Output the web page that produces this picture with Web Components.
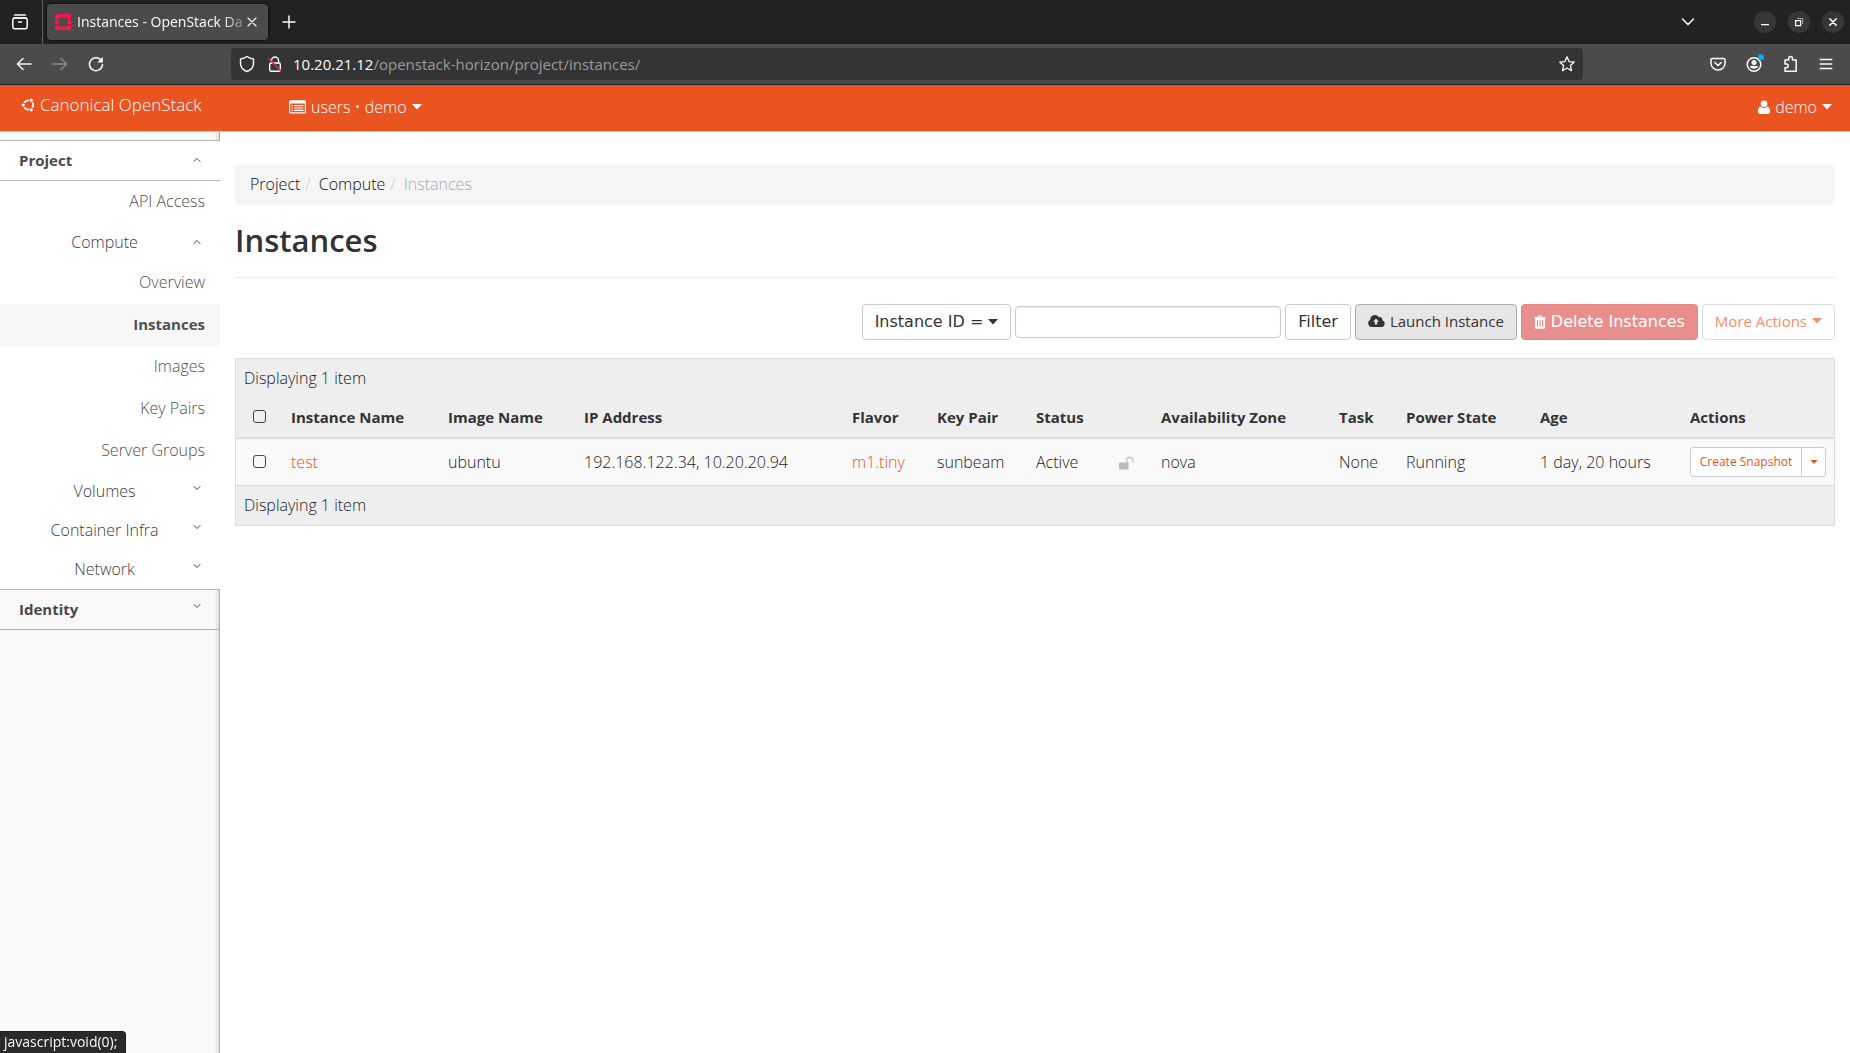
<!DOCTYPE html>
<html lang="en">
<head>
<meta charset="utf-8">
<title>Instances - OpenStack Dashboard</title>
<style>
  body { margin: 0; min-height: 100vh; display: flex; flex-direction: column; background: #fff; color: #222;
    font: 300 16px/24px "Open Sans", "Noto Sans", sans-serif; }
  app-body { flex: 1; }
</style>
</head>
<body>
<browser-window></browser-window>
<app-header></app-header>
<app-body>
  <side-nav slot="nav">
    <nav-group label="Project" open>
      <nav-link>API Access</nav-link>
      <nav-panel label="Compute" open></nav-panel>
      <nav-link>Overview</nav-link>
      <nav-link active>Instances</nav-link>
      <nav-link>Images</nav-link>
      <nav-link>Key Pairs</nav-link>
      <nav-link>Server Groups</nav-link>
      <nav-panel label="Volumes"></nav-panel>
      <nav-panel label="Container Infra"></nav-panel>
      <nav-panel label="Network"></nav-panel>
    </nav-group>
    <nav-group label="Identity"></nav-group>
  </side-nav>
  <page-heading>Instances</page-heading>
  <table-actions></table-actions>
  <instance-table></instance-table>
</app-body>
<status-hint>javascript:void(0);</status-hint>

<script>
const define = (name, html) => customElements.define(name, class extends HTMLElement {
  constructor() {
    super();
    this.attachShadow({ mode: 'open' }).innerHTML = '<style>*{box-sizing:border-box}button,input{font:inherit;color:inherit;margin:0}button{cursor:pointer}a{color:inherit;text-decoration:none}</style>' +
      (typeof html === 'function' ? html(this) : html);
  }
});

/* name: [width, height, viewBox, markup] */
const line = (d, w = 1.5) => `<path d="${d}" fill="none" stroke="currentColor" stroke-width="${w}" stroke-linecap="round" stroke-linejoin="round"/>`;
const friend = (x, y) => `<circle cx="${x}" cy="${y}" r="2.500" fill="#e95420"/><circle cx="${x}" cy="${y}" r="1.600" fill="currentColor"/>`;
const icons = {
  view: [18, 18, '0 0 18 18', line('M3.500 2h11M3 5h12', 1.4) + '<rect x="1.800" y="5" width="14.400" height="10.800" rx="2" fill="none" stroke="currentColor" stroke-width="1.500"/>' + line('M7.500 9h3')],
  favicon: [16, 16, '0 0 16 16', '<path d="M1 0h14L16 1V5h-3.500V3.500h-9V5H0V1zM0 6h3.500v4H0zM12.500 6H16v4h-3.500zM0 11h3.500v1.500h9V11H16v4L15 16H1L0 15z" fill="#f5174a"/><path d="M0 5h4v1H0zM12 5h4v1h-4zM0 10h4v1H0zM12 10h4v1h-4z" fill="#b01a3a"/>'],
  close: [10, 10, '0 0 10 10', line('M1 1l8 8M9 1L1 9', 1.2)],
  plus: [14, 14, '0 0 14 14', line('M7 1v12M1 7h12')],
  down: [14, 8, '0 0 14 8', line('M1.500 1l5.500 5.500L12.500 1')],
  min: [10, 10, '0 0 10 10', '<path d="M1 7h8v1.300H1z" fill="currentColor"/>'],
  max: [10, 10, '0 0 10 10', '<path d="M1.600 3.600h5v5h-5z" fill="none" stroke="currentColor" stroke-width="1.300"/><path d="M3.500 1.500h5.200V7" fill="none" stroke="#aaa"/>'],
  cross: [10, 10, '0 0 10 10', line('M1.800 1.800l6.400 6.400M8.200 1.800L1.800 8.200', 1.6)],
  back: [16, 16, '0 0 16 16', line('M15 8H1.500M7 2.500L1.500 8 7 13.500')],
  forward: [16, 16, '0 0 16 16', line('M1 8h13.500M9 2.500L14.500 8 9 13.500')],
  reload: [16, 16, '0 0 16 16', line('M13.800 5.200A6.500 6.500 0 1 0 14.500 8.500') + '<path d="M14.800 1v5.500H9.300z" fill="currentColor"/>'],
  shield: [16, 18, '0 0 16 18', line('M8 1.500c2 1.500 4 2.200 6.500 2.500v4c0 4-2.500 7-6.500 8.500C4 15 1.500 12 1.500 8V4C4 3.700 6 3 8 1.500z', 1.4)],
  lock: [16, 18, '0 0 16 18', '<rect x="2.700" y="8" width="10.600" height="8.200" rx="1.500" fill="none" stroke="currentColor" stroke-width="1.400"/>' + line('M4.500 8V5.500a3.500 3.500 0 0 1 7 0V8', 1.4) + '<path d="M1 3l13.500 13.500" stroke="#e22850" stroke-width="1.700"/>'],
  star: [18, 18, '0 0 18 18', line('M9 1.800l2.100 4.800 5.200.5-3.900 3.500 1.100 5.100L9 13l-4.500 2.700 1.100-5.100L1.700 7.100l5.200-.5z', 1.3)],
  pocket: [16, 16, '0 0 16 16', line('M2.300 2.500h11.400q1.300 0 1.300 1.300v3.400a7 6.800 0 0 1-14 0V3.800q0-1.300 1.300-1.300zM4.800 6.500L8 9.500l3.200-3', 1.5)],
  account: [20, 20, '0 0 20 20', '<circle cx="10" cy="10.500" r="6.800" fill="none" stroke="currentColor" stroke-width="1.500"/><circle cx="10" cy="8.500" r="2.500" fill="currentColor"/><path d="M5.800 12h8.400a4.300 3.500 0 0 1-8.400 0z" fill="currentColor"/><circle cx="17" cy="3.200" r="3" fill="#00b3f4"/>'],
  puzzle: [16, 18, '0 0 16 18', line('M6.700 5V3.400a1.900 1.900 0 0 1 3.800 0V5h3.700v11.300H3v-3.600h1.300a1.900 1.900 0 0 0 0-3.800H3V5z', 1.5)],
  menu: [14, 14, '0 0 14 14', line('M1.200 2.500h11.600M1.200 7h11.600M1.200 11.500h11.600', 1.4)],
  circle: [14, 14, '0 0 14 14', '<circle cx="7.500" cy="7" r="4.600" fill="none" stroke="currentColor" stroke-width="1.900"/>' + friend(2.2, 7) + friend(10.2, 2.2) + friend(10.2, 11.8)],
  list: [17, 14, '0 0 17 14', '<rect x=".6" y=".9" width="15.800" height="12" rx="1" fill="none" stroke="currentColor" stroke-width="1.200"/><path d="M.5 1h16v2.500H.5zM2.500 5h1.300v1.200H2.500zM2.500 7.400h1.300v1.200H2.500zM2.500 9.800h1.300V11H2.500zM5 5h9.500v1.200H5zM5 7.400h9.500v1.200H5zM5 9.800h9.500V11H5z" fill="currentColor"/>'],
  user: [12, 14, '0 0 12 14', '<circle cx="6" cy="3.700" r="3.300" fill="currentColor"/><path d="M2.500 6.500Q6 9.500 9.500 6.500Q12 7.500 12 11.500Q12 14 9.800 14H2.200Q0 14 0 11.500Q0 7.500 2.500 6.500z" fill="currentColor"/>'],
  caret: [10, 6, '0 0 10 6', '<path d="M0 0h10L5 5.500z" fill="currentColor"/>'],
  caretSmall: [8, 4, '0 0 8 4', '<path d="M.5 0h7L4 4z" fill="currentColor"/>'],
  up: [8, 6, '0 0 8 6', line('M1 4.500L4 1.500l3 3', 1)],
  dn: [8, 6, '0 0 8 6', line('M1 1.500l3 3 3-3', 1)],
  cloud: [17, 14, '0 0 17 14', '<path d="M3.800 13A3.800 3.800 0 0 1 2.300 5.800A4.600 4.600 0 0 1 10.800 3.300A2.600 2.600 0 0 1 14.300 6.200A3.500 3.500 0 0 1 13.500 13z" fill="currentColor"/><path d="M8 4.500l3 3.200H9.200V10.500H6.800V7.700H5z" fill="#e6e6e6"/>'],
  trash: [12, 14, '0 0 12 14', '<path d="M0 2.200h3.500L4.300.4h3.400l.8 1.800H12v1.300h-1V12.500q0 1.300-1.300 1.300H2.300Q1 13.800 1 12.500V3.500H0zM4.700 2.200h2.600l-.3-.8H5zM3 5v6.800h1.100V5zM5.500 5v6.800h1.100V5zM8 5v6.800h1.100V5z" fill="currentColor" fill-rule="evenodd"/>'],
  unlock: [16, 14, '0 0 16 14', '<rect x="0" y="6.500" width="9.600" height="7" rx=".8" fill="currentColor"/><path d="M7.800 7V4.200a3 3 0 0 1 6 0V6.500" fill="none" stroke="currentColor" stroke-width="1.500" opacity=".8"/>']
};
customElements.define('app-icon', class extends HTMLElement {
  constructor() { super(); this.attachShadow({ mode: 'open' }); }
  connectedCallback() {
    const [w, h, box, body] = icons[this.getAttribute('name')];
    this.shadowRoot.innerHTML = `<style>:host{display:inline-flex;flex:none}svg{display:block}</style><svg width="${w}" height="${h}" viewBox="${box}" aria-hidden="true">${body}</svg>`;
  }
});
const icon = name => `<app-icon name="${name}"></app-icon>`;

define('browser-window', `
<style>
  :host { display: block; color: #fbfbfe; font: 400 14px/20px "Open Sans", "Noto Sans", sans-serif; border-bottom: 1px solid #1c1b22; }
  button { border: 0; background: none; padding: 0; display: flex; align-items: center; justify-content: center; }
  .tabs { height: 44px; background: #222; display: flex; align-items: center; }
  .view { width: 43px; height: 44px; padding-right: 2px; border-right: 1px solid #5b5b5b; }
  .tab { width: 221px; height: 36px; margin-left: 4px; padding: 0 7px 0 8px; border-radius: 4px; background: #4b4b4b; display: flex; align-items: center; box-shadow: 0 0 3px #000; }
  .title { flex: 1; margin-left: 6px; overflow: hidden; white-space: nowrap; -webkit-mask-image: linear-gradient(to right, #000 88%, transparent 105%); mask-image: linear-gradient(to right, #000 88%, transparent 105%); }
  .tab button { width: 18px; }
  .add { width: 42px; }
  .all { margin-left: auto; margin-right: 59px; }
  .win { display: flex; gap: 12px; padding-right: 6px; }
  .win button { width: 22px; height: 22px; border-radius: 50%; background: #373737; }
  .bar { height: 40px; background: #4b4b4b; display: flex; align-items: center; }
  .go { display: flex; width: 231px; padding-left: 6px; }
  .go button { width: 36px; height: 32px; }
  .go button:disabled { color: #8a8a8a; }
  .url { flex: 1; height: 32px; padding: 0 7px 0 8px; border-radius: 4px; background: #343434; display: flex; align-items: center; }
  .url app-icon + app-icon { margin-left: 12px; }
  .url p { flex: 1; margin: 0 0 0 10px; color: #9b9b9b; font-size: 15px; }
  .url b { font-weight: 400; color: #fbfbfe; }
  .tools { display: flex; width: 267px; justify-content: flex-end; padding-right: 6px; }
  .tools button { width: 36px; height: 32px; }
</style>
<div class="tabs">
  <button class="view" aria-label="View">${icon('view')}</button>
  <div class="tab">${icon('favicon')}<span class="title">Instances - OpenStack Da</span><button aria-label="Close tab">${icon('close')}</button></div>
  <button class="add" aria-label="New tab">${icon('plus')}</button>
  <button class="all" aria-label="List all tabs">${icon('down')}</button>
  <div class="win"><button aria-label="Minimize">${icon('min')}</button><button aria-label="Restore">${icon('max')}</button><button aria-label="Close">${icon('cross')}</button></div>
</div>
<div class="bar">
  <div class="go"><button aria-label="Back">${icon('back')}</button><button aria-label="Forward" disabled>${icon('forward')}</button><button aria-label="Reload">${icon('reload')}</button></div>
  <div class="url">${icon('shield')}${icon('lock')}<p><b>10.20.21.12</b>/openstack-horizon/project/instances/</p><button aria-label="Bookmark">${icon('star')}</button></div>
  <div class="tools"><button aria-label="Pocket">${icon('pocket')}</button><button aria-label="Account">${icon('account')}</button><button aria-label="Extensions">${icon('puzzle')}</button><button aria-label="Menu">${icon('menu')}</button></div>
</div>`);

define('app-header', `
<style>
  :host { display: flex; align-items: center; box-sizing: border-box; height: 47px; padding: 0 18px 2px 21px; background: #e95420; border-bottom: 1px solid #ccc; color: #fff; }
  a, button { display: flex; align-items: center; gap: 5px; border: 0; background: none; padding: 0; }
  .brand { width: 268px; padding-bottom: 4px; font-size: 17px; }
  .user { margin-left: auto; }
</style>
<a class="brand" href="#">${icon('circle')}Canonical OpenStack</a>
<button>${icon('list')}<span>users • demo</span>${icon('caret')}</button>
<button class="user">${icon('user')}<span>demo</span>${icon('caret')}</button>`);

define('app-body', `
<style>
  :host { display: flex; }
  main { flex: 1; min-width: 0; padding: 33px 15px 0; }
  ol { display: flex; height: 40px; align-items: center; margin: 0; padding: 0 15px 2px; list-style: none; background: #f5f5f5; border-radius: 4px; color: #111; }
  li + li::before { content: "/"; padding: 0 8px 0 5px; color: #ccc; }
  li:last-child { color: #aaa; }
</style>
<slot name="nav"></slot>
<main>
  <nav aria-label="Breadcrumb"><ol><li><a href="#">Project</a></li><li><a href="#">Compute</a></li><li>Instances</li></ol></nav>
  <slot></slot>
</main>`);

define('side-nav', `
<style>
  :host { display: block; width: 220px; padding-top: 8px; background: #f9f9f9; box-shadow: inset -1px 0 0 #b0b0b0, inset -6px 0 5px -4px #ccc; }
</style><slot></slot>`);

define('nav-group', el => `
<style>
  :host { display: block; }
  button { display: flex; align-items: center; justify-content: space-between; width: 100%; height: 41px; padding: 0 19px 2px; border: 1px solid #b3b3b3; border-width: 1px 0; background: none; font-size: 15px; font-weight: 700; color: #4a4a4a; }
  :host([open]) { background: #fff; }
  :host(:not([open])) app-icon { padding-bottom: 6px; }
</style>
<button>${el.getAttribute('label')}${icon(el.hasAttribute('open') ? 'up' : 'dn')}</button><slot></slot>`);

define('nav-panel', el => `
<style>
  :host { display: block; }
  button { display: flex; align-items: center; width: 100%; height: 39px; padding: 0 19px 2px 16px; border: 0; background: none; color: #3c3c3c; }
  span { flex: 1; text-align: center; }
  :host(:not([open])) app-icon { padding-bottom: 6px; }
</style>
<button><span>${el.getAttribute('label')}</span>${icon(el.hasAttribute('open') ? 'up' : 'dn')}</button>`);

define('nav-link', `
<style>
  :host { display: block; color: #505050; }
  a { display: flex; align-items: center; justify-content: flex-end; height: 42px; padding: 0 15px 2px; }
  :host([active]) { background: #f7f7f7; font-size: 15px; font-weight: 700; }
</style><a href="#"><slot></slot></a>`);

define('page-heading', `
<style>
  :host { display: block; border-bottom: 1px solid #eee; padding: 15px 0 17px; margin-bottom: 26px; }
  h1 { margin: 0; font: 600 31px/40px "Open Sans", sans-serif; color: #333; }
</style><h1><slot></slot></h1>`);

define('table-actions', `
<style>
  :host { display: flex; justify-content: flex-end; align-items: center; gap: 4px; margin-bottom: 18px; color: #333; font: 400 16px/20px "DejaVu Sans", sans-serif; }
  button { display: flex; align-items: center; gap: 5px; height: 36px; padding: 0 12px; border: 1px solid #ccc; border-radius: 4px; background: #fff; white-space: nowrap; }
  input { width: 266px; height: 32px; padding: 0 12px; border: 1px solid #ccc; border-radius: 4px; background: #fff; box-shadow: inset 0 1px 1px rgba(0,0,0,.08); }
  .alt { padding-bottom: 2px; font: 400 15px/20px "Open Sans", sans-serif; }
  .launch { background: #e6e6e6; border-color: #adadad; }
  .delete { background: #e88f8d; border-color: #e48481; color: #fff; }
  .more { color: #f28f6b; border-color: #ddd; }
</style>
<button>Instance ID =${icon('caret')}</button>
<input type="text" aria-label="Filter value">
<button>Filter</button>
<button class="alt launch">${icon('cloud')}Launch Instance</button>
<button class="delete">${icon('trash')}Delete Instances</button>
<button class="alt more">More Actions${icon('caret')}</button>`);

const columns = [['', 47], ['Instance Name', 157], ['Image Name', 136], ['IP Address', 268], ['Flavor', 85], ['Key Pair', 99], ['Status', 83], ['', 42], ['Availability Zone', 178], ['Task', 67], ['Power State', 134], ['Age', 150], ['Actions', 152]];
const cells = ['<a href="#">test</a>', 'ubuntu', '192.168.122.34, 10.20.20.94', '<a href="#">m1.tiny</a>', 'sunbeam', 'Active', icon('unlock'), 'nova', 'None', 'Running', '1 day, 20 hours'];
define('instance-table', `
<style>
  :host { display: block; border: 1px solid #ddd; background: #eee; }
  p { margin: 0; padding: 0 8px; line-height: 39px; }
  table { width: 100%; table-layout: fixed; border-collapse: collapse; }
  th, td { padding: 0 8px; text-align: left; white-space: nowrap; }
  th { height: 40px; padding-bottom: 2px; font-size: 15px; font-weight: 700; color: #333; border-bottom: 2px solid #ddd; }
  td { height: 47px; background: #f9f9f9; border-bottom: 1px solid #ddd; }
  th:first-child, td:first-child { padding-left: 17px; }
  td a { color: #e95420; }
  td app-icon { color: #bbb; vertical-align: middle; }
  input { appearance: none; display: block; width: 13px; height: 13px; border: 1px solid #444; border-radius: 3px; }
  .split { display: flex; width: 136px; height: 30px; border: 1px solid #ccc; border-radius: 3px; background: #fff; color: #e95420; }
  .split button { flex: 1; border: 0; padding: 0; background: none; font: 400 12px/18px "Open Sans", sans-serif; }
  .split button + button { flex: none; width: 24px; border-left: 1px solid #ccc; display: flex; align-items: center; justify-content: center; }
  .split app-icon { color: inherit; }
</style>
<p>Displaying 1 item</p>
<table>
  <colgroup>${columns.map(c => `<col style="width:${c[1]}px">`).join('')}</colgroup>
  <thead><tr>${columns.map((c, i) => `<th>${i ? c[0] : '<input type="checkbox" aria-label="Select all">'}</th>`).join('')}</tr></thead>
  <tbody><tr><td><input type="checkbox" aria-label="Select test"></td>${cells.map(c => `<td>${c}</td>`).join('')}
    <td><div class="split"><button>Create Snapshot</button><button aria-label="More actions">${icon('caretSmall')}</button></div></td></tr></tbody>
</table>
<p>Displaying 1 item</p>`);

define('status-hint', `
<style>
  :host { position: fixed; left: 0; bottom: 0; height: 22px; padding: 0 8px 0 4px; background: #2b2a2b; border: 1px solid #1a1a1a; border-width: 1px 1px 0 0; border-top-right-radius: 4px; box-sizing: border-box; color: #fbfbfe; font: 400 14px/20px "Open Sans", sans-serif; }
</style><slot></slot>`);
</script>
</body>
</html>
